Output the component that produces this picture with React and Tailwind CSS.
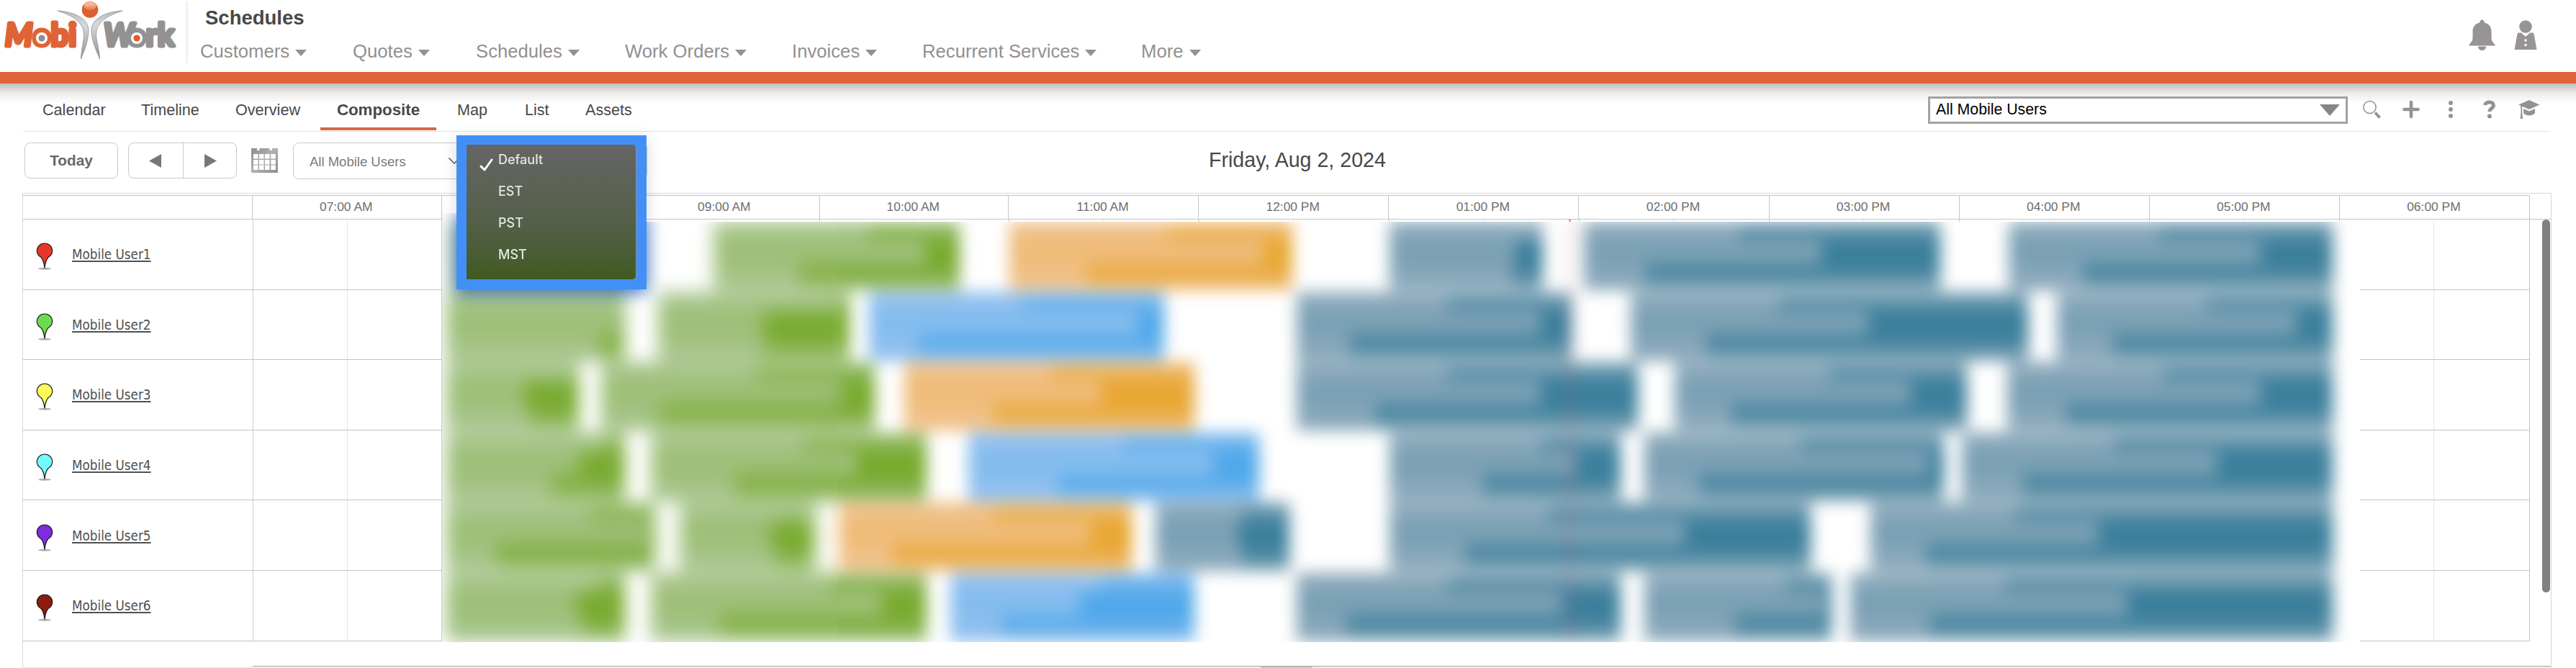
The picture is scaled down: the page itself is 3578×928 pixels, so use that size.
import React from "react";

const NAV = [
  ["Customers", "w-[212px]"],
  ["Quotes", "w-[171px]"],
  ["Schedules", "w-[207px]"],
  ["Work Orders", "w-[232px]"],
  ["Invoices", "w-[181px]"],
  ["Recurrent Services", "w-[304px]"],
  ["More", "w-[120px]"],
];

const TABS = [
  ["Calendar", "w-[137px]"],
  ["Timeline", "w-[131px]"],
  ["Overview", "w-[140px]"],
  ["Composite", "w-[161px]"],
  ["Map", "ml-[7px] w-[94px]"],
  ["List", "w-[84px]"],
  ["Assets", "w-[120px]"],
];

const HOURS = [
  "07:00 AM", "08:00 AM", "09:00 AM", "10:00 AM", "11:00 AM", "12:00 PM",
  "01:00 PM", "02:00 PM", "03:00 PM", "04:00 PM", "05:00 PM", "06:00 PM",
];

const USERS = [
  ["Mobile User1", "#e8372a"],
  ["Mobile User2", "#6cdc4e"],
  ["Mobile User3", "#fdfb5a"],
  ["Mobile User4", "#74fbfd"],
  ["Mobile User5", "#7f2be0"],
  ["Mobile User6", "#8f1a10"],
];

const COLORS = {
  g: ["#79ab2f", "#a6c48a"],
  o: ["#e9a733", "#f0c189"],
  b: ["#50a9ea", "#90c0ef"],
  t: ["#3b7f9c", "#8ba9ba"],
};

// [row, colour, start, end, end of line 1, end of line 2, end of line 3]
const EVENTS = [
  [0, "g", 624, 860, 860, 860, 800],
  [0, "g", 991, 1333, 1205, 1285, 1110],
  [0, "o", 1402, 1795, 1620, 1755, 1510],
  [0, "t", 1930, 2143, 2143, 2105, 2100],
  [0, "t", 2200, 2695, 2415, 2530, 2285],
  [0, "t", 2790, 3240, 3000, 3140, 2893],
  [1, "g", 620, 868, 866, 866, 832],
  [1, "g", 914, 1180, 1165, 1060, 1060],
  [1, "b", 1207, 1617, 1420, 1580, 1275],
  [1, "t", 1801, 2183, 2010, 2140, 1875],
  [1, "t", 2265, 2817, 2470, 2595, 2370],
  [1, "t", 2857, 3240, 3065, 3190, 2935],
  [2, "g", 620, 804, 799, 728, 735],
  [2, "g", 835, 1215, 1050, 1168, 915],
  [2, "o", 1256, 1659, 1460, 1530, 1380],
  [2, "t", 1801, 2275, 2010, 2140, 1910],
  [2, "t", 2326, 2732, 2540, 2655, 2405],
  [2, "t", 2788, 3240, 3005, 3140, 2870],
  [3, "g", 620, 868, 840, 805, 765],
  [3, "g", 904, 1287, 1115, 1190, 1020],
  [3, "b", 1345, 1749, 1560, 1685, 1470],
  [3, "t", 1930, 2251, 2140, 2190, 2060],
  [3, "t", 2284, 2700, 2500, 2680, 2360],
  [3, "t", 2725, 3240, 2935, 3080, 2810],
  [4, "g", 620, 910, 820, 902, 690],
  [4, "g", 944, 1132, 1127, 1070, 1075],
  [4, "o", 1165, 1572, 1380, 1515, 1240],
  [4, "t", 1605, 1791, 1725, 1720, 1725],
  [4, "t", 1930, 2515, 2150, 2340, 2035],
  [4, "t", 2598, 3240, 2800, 2915, 2675],
  [5, "g", 620, 868, 830, 800, 810],
  [5, "g", 904, 1287, 1150, 1225, 1000],
  [5, "b", 1320, 1659, 1530, 1500, 1390],
  [5, "t", 1801, 2251, 2010, 2170, 1870],
  [5, "t", 2284, 2544, 2480, 2535, 2410],
  [5, "t", 2570, 3240, 2785, 2955, 2680],
];

function Logo() {
  const font = {
    fontFamily: "Lato, 'Liberation Sans', sans-serif",
    fontWeight: 700,
    strokeLinejoin: "round",
    strokeWidth: 5,
  };
  return (
    <svg className="h-[90px] w-[258px] shrink-0" viewBox="0 0 258 90">
      <defs>
        <linearGradient id="limb" x1="0" y1="0" x2="0" y2="1">
          <stop offset="0" stopColor="#b9bdc1" />
          <stop offset=".3" stopColor="#d6dadb" />
          <stop offset="1" stopColor="#8e9093" />
        </linearGradient>
        <linearGradient id="shine" x1="0" y1="0" x2="0" y2="1">
          <stop offset="0" stopColor="#fbd2b6" />
          <stop offset="1" stopColor="#e5733f" />
        </linearGradient>
      </defs>
      <text y="63.500" fontSize="43.500" fill="#e06336" stroke="#e06336" style={font}>
        <tspan x="7" fontStyle="italic">M</tspan>
        <tspan x="45.500">obi</tspan>
      </text>
      <circle cx="58" cy="53" r="8" fill="#fff" />
      <circle cx="58" cy="53" r="4.600" fill="#8f8d8e" />
      <text y="63.500" fontSize="43.500" fill="#939192" stroke="#939192" style={font}>
        <tspan x="144" fontStyle="italic">W</tspan>
        <tspan x="177.500">ork</tspan>
      </text>
      <circle cx="190" cy="53" r="8" fill="#fff" />
      <circle cx="190" cy="53" r="4.600" fill="#e05a2b" />
      <path d="M80 15C100 16 124 24 123 44C122 60 117 70 112.500 82C113 66 118 54 116 43C113 28 96 20 80 15Z" fill="url(#limb)" stroke="#8f9194" strokeWidth=".8" />
      <path d="M170 15C150 16 126 24 127 44C128 60 134 70 138.500 82C138 66 132 54 134 43C137 28 154 20 170 15Z" fill="url(#limb)" stroke="#8f9194" strokeWidth=".8" />
      <circle cx="125" cy="13.500" r="11.300" fill="#df5f2f" />
      <ellipse cx="125" cy="8.500" rx="8.500" ry="5.500" fill="url(#shine)" />
    </svg>
  );
}

function Pin({ color }) {
  return (
    <svg className="h-[39px] w-[24px]" viewBox="0 0 24 39">
      <ellipse cx="12" cy="36.300" rx="9" ry="1.500" fill="#777" opacity=".6" />
      <path d="M12 35.500C11.300 29 10 23.500 7 20.500C3 18.200 1.300 15 1.300 11.500A10.700 10.500 0 0 1 22.700 11.500C22.700 15 21 18.200 17 20.500C14 23.500 12.700 29 12 35.500Z" fill={color} stroke="#1a1a1a" strokeWidth="1.200" />
    </svg>
  );
}

function CalendarIcon() {
  return (
    <svg className="h-[34px] w-[37px]" viewBox="0 0 37 34">
      <defs>
        <linearGradient id="cal" x1="0" y1="0" x2="1" y2="1">
          <stop offset="0" stopColor="#8d8d8d" />
          <stop offset=".5" stopColor="#b0b0b0" />
          <stop offset="1" stopColor="#8d8d8d" />
        </linearGradient>
      </defs>
      <rect width="37" height="34" fill="url(#cal)" />
      <rect x="8" width="3.500" height="3" fill="#fff" />
      <rect x="25.500" width="3.500" height="3" fill="#fff" />
      {[8, 16, 23.5].map((y) =>
        [3, 11, 19, 27.3].map((x) => (
          <rect key={`${x}-${y}`} x={x} y={y} width="6.500" height="6.500" fill="#fff" />
        ))
      )}
    </svg>
  );
}

function BlurPane({ frame, left, top, blur }) {
  return (
    <div className={`absolute overflow-hidden bg-white ${frame}`}>
      <div className={`absolute inset-0 ${blur}`}>
        {EVENTS.map(([row, c, start, end, ...lines], i) => {
          const [base, text] = COLORS[c];
          return (
            <div
              key={i}
              className="absolute overflow-hidden"
              style={{ left: start - left, top: 308 + row * 97.6 - top, width: end - start, height: 95, background: base }}
            >
              <div className="absolute inset-x-0 top-0 h-[24px] opacity-50" style={{ background: text }} />
              <div className="absolute inset-x-0 bottom-0 h-[26px] opacity-40" style={{ background: text }} />
              {lines.map((stop, n) => (
                <div
                  key={n}
                  className="absolute left-0"
                  style={{ top: [0, 26, 60][n], width: stop - start, height: [26, 34, 35][n], background: text, opacity: [0.95, 0.8, 0.95][n] }}
                />
              ))}
              <div className="absolute inset-x-0 top-0 h-[6px] opacity-70" style={{ background: text }} />
              <div className="absolute inset-x-0 bottom-0 h-[8px] opacity-70" style={{ background: text }} />
            </div>
          );
        })}
        <div className="absolute h-[600px] w-[6px] bg-[#c0506a] opacity-25" style={{ left: 2178 - left, top: 300 - top }} />
        <div className="absolute h-[106px] w-[264px] bg-[#4f86e0]" style={{ left: 634 - left, top: 300 - top }} />
      </div>
    </div>
  );
}

export default function App() {
  return (
    <div className="relative h-[928px] w-[3578px] overflow-hidden bg-white font-['Liberation_Sans',Arial,sans-serif]">
      <header className="flex h-[100px] items-start">
        <Logo />
        <div className="mt-[2px] h-[86px] w-[3px] bg-[#f1f1f1]" />
        <div className="ml-[17px] flex flex-1 flex-col">
          <h1 className="h-[50px] pl-[7px] text-[27.500px] leading-[50px] font-bold text-[#484848]">Schedules</h1>
          <nav className="flex h-[42px] items-center">
            {NAV.map(([label, width]) => (
              <a key={label} className={`flex shrink-0 items-center text-[25.700px] leading-[42px] whitespace-nowrap text-[#929090] ${width}`}>
                {label}
                <svg className="mt-[4px] ml-[8px] h-[9px] w-[16px]" viewBox="0 0 16 9">
                  <path d="M0 0H16L8 9Z" fill="#929090" />
                </svg>
              </a>
            ))}
          </nav>
        </div>
        <div className="flex gap-[26px] pt-[27px] pr-[54px]">
          <svg className="h-[44px] w-[37px]" viewBox="0 0 37 44" fill="#989493">
            <path d="M18.500 0.500C20.500 0.500 21.500 2.500 22 4.500C28 6 31.500 10 31.500 17V25C31.500 30 33.500 31.500 36.500 35V36.500H.5V35C3.500 31.500 5.500 30 5.500 25V17C5.500 10 9 6 15 4.500C15.500 2.500 16.500 .5 18.500 .5Z" />
            <path d="M13 37.500H24C24 41 21.500 43 18.500 43S13 41 13 37.500Z" />
          </svg>
          <svg className="h-[43px] w-[32px]" viewBox="0 0 32 43" fill="#989493">
            <circle cx="16" cy="10" r="8.800" />
            <path d="M6 18.500H10L16 24L22 18.500H26Q27 18.500 27.500 20L31.500 42H.5L4.500 20Q5 18.500 6 18.500Z" />
            <circle cx="16" cy="29" r="1.700" fill="#fff" />
            <circle cx="16" cy="35.500" r="1.700" fill="#fff" />
          </svg>
        </div>
      </header>
      <div className="relative h-[16px] bg-[#df6238]">
        <div className="absolute inset-x-0 top-full h-[28px] bg-linear-to-b from-black/25 via-black/7 via-50% to-transparent" />
      </div>

      <div className="mr-[37px] ml-[32px] flex h-[67px] justify-between border-b border-[#e2e2e2] pl-[5px]">
        <div className="flex">
          {TABS.map(([label, width]) => (
            <a
              key={label}
              className={`relative h-[65px] shrink-0 leading-[74px] whitespace-nowrap text-[#484848] ${width} ${
                label === "Composite" ? "border-b-[4px] border-[#d56842] text-center text-[22.300px] font-bold" : "pl-[22px] text-[21.600px]"
              }`}
            >
              {label}
            </a>
          ))}
        </div>
        <div className="relative flex pr-[13px]">
          <div className="mt-[18px] mr-[-1px] flex h-[38px] w-[583px] items-center justify-between border-[3px] border-[#a2a2a2] bg-white pr-[8px] pl-[8px] text-[21.300px] text-black">
            <span>All Mobile Users</span>
            <svg className="h-[16px] w-[28px]" viewBox="0 0 28 16">
              <path d="M0 0H28L14 16Z" fill="#868686" />
            </svg>
          </div>
          <div className="mt-[20px] ml-[22px] flex h-[32px] items-center">
            <svg className="h-[26px] w-[25px]" viewBox="0 0 25 26" fill="none" stroke="#959293">
              <circle cx="9.500" cy="10" r="8.600" strokeWidth="1.500" />
              <path d="M17 17.500L23.500 24.500" strokeWidth="4" />
            </svg>
            <svg className="ml-[30px] h-[26px] w-[24px]" viewBox="0 0 24 26" stroke="#959293" strokeWidth="4.600" strokeLinecap="round">
              <path d="M12 3V23M2.500 13H21.500" />
            </svg>
            <svg className="ml-[39px] h-[26px] w-[8px]" viewBox="0 0 8 26" fill="#959293">
              <circle cx="4" cy="4" r="3" />
              <circle cx="4" cy="13" r="3" />
              <circle cx="4" cy="22" r="3" />
            </svg>
            <svg className="ml-[41px] h-[26px] w-[18px]" viewBox="0 0 18 26" fill="none" stroke="#959293">
              <path d="M2.500 7C3.500 1.500 14.500 1.500 14.500 7.500C14.500 11.500 9 11.500 9 16" strokeWidth="5" />
              <circle cx="9" cy="22.500" r="3" fill="#959293" stroke="none" />
            </svg>
            <svg className="ml-[31px] h-[27px] w-[30px]" viewBox="0 0 30 27" fill="#959293">
              <path d="M15 0L29.500 6.500L15 13L0 6.500Z" />
              <path d="M7 12L15 15.500L23 12V18C20 22.500 10 22.500 7 18Z" />
              <path d="M3.200 8H5.200V17L6 26H2.500L3.500 17Z" />
            </svg>
          </div>
        </div>
      </div>

      <div className="relative flex h-[85px] items-start pt-[15px] pl-[34px] text-[#707070]">
        <button className="h-[50px] w-[130px] rounded-[8px] border border-[#c8c8c8] text-[20.800px] font-bold text-[#686868]">Today</button>
        <div className="ml-[14px] flex h-[50px] w-[151px] rounded-[8px] border border-[#c8c8c8]">
          <div className="flex w-[76px] items-center border-r border-[#c8c8c8] pl-[28px]">
            <svg className="h-[19px] w-[17px]" viewBox="0 0 17 19"><path d="M0 9.500L17 0V19Z" fill="#777" /></svg>
          </div>
          <div className="flex flex-1 items-center pl-[29px]">
            <svg className="h-[19px] w-[17px]" viewBox="0 0 17 19"><path d="M17 9.500L0 0V19Z" fill="#777" /></svg>
          </div>
        </div>
        <div className="mt-[8px] ml-[20px]"><CalendarIcon /></div>
        <div className="ml-[21px] flex h-[51px] w-[241px] items-center justify-between rounded-[8px] border border-[#c8c8c8] pr-[8px] pl-[22px] text-[18.500px] text-[#7a7a7a]">
          <span className="pt-[2px]">All Mobile Users</span>
          <svg className="h-[9px] w-[16px]" viewBox="0 0 16 9" fill="none" stroke="#666" strokeWidth="1.600"><path d="M.5 .5L8 8L15.500 .5" /></svg>
        </div>
        <div className="ml-[2px] h-[51px] w-[249px] rounded-[8px] border border-[#c8c8c8]" />
        <div className="ml-[780px] h-[51px] text-[28.600px] leading-[49px] whitespace-nowrap text-[#484848]">Friday, Aug 2, 2024</div>
      </div>

      <section className="relative ml-[31px] h-[660px] w-[3513px] border border-[#d8d8d8] pt-[2px]">
        <div className="flex h-[34px] w-[3512px] border-b border-[#c4c4c4]">
          <div className="flex w-[3482px] border-t border-r border-[#c4c4c4]">
            <div className="w-[318px] shrink-0" />
            <div className="grid flex-1 grid-cols-[repeat(4,262.4fr)_repeat(8,264fr)]">
              {HOURS.map((h) => (
                <div key={h} className="border-l border-[#c6c6c6] pr-[2px] text-center text-[17.400px] leading-[31px] text-[#6e6e6e]">{h}</div>
              ))}
            </div>
          </div>
        </div>
        {USERS.map(([name, color]) => (
          <div key={name} className="flex h-[97.600px] w-[3482px] border-r border-b border-[#c4c4c4]">
            <div className="flex w-[319px] shrink-0 items-center pl-[18px]">
              <div className="mt-[7px]"><Pin color={color} /></div>
              <a className="mt-[2px] ml-[26px] text-[18.700px] text-[#505050] underline decoration-[1.500px] underline-offset-[2px] font-['DejaVu_Sans_Condensed','DejaVu_Sans',sans-serif]">{name}</a>
            </div>
            <div className="grid flex-1 grid-cols-[repeat(4,262.4fr)_repeat(8,264fr)]">
              {HOURS.map((h) => (
                <div key={h} className="flex border-l border-[#ccc]">
                  <div className="w-1/2 border-r border-[#e6e6e6]" />
                </div>
              ))}
            </div>
          </div>
        ))}
        <div className="mt-[34px] flex h-[3px]">
          <div className="w-[319px] border-t border-white bg-[#efefef]" />
          <div className="flex flex-1 justify-start border-t border-[#a5a5a5] bg-[#f0f0f0] pl-[1400px]">
            <div className="h-[2px] w-[72px] bg-[#c8c8c8]" />
          </div>
        </div>
        <div className="absolute top-[36px] right-[1px] h-[518px] w-[11px] rounded-full bg-[#808080]" />
      </section>

      <div className="absolute top-[304px] left-[2179px] h-[5px] w-[3px] bg-[#ec9a9a]" />
      <BlurPane frame="left-[614px] top-[296px] w-[284px] h-[596px]" left={614} top={296} blur="blur-[12px]" />
      <BlurPane frame="left-[898px] top-[308px] w-[266px] h-[584px]" left={898} top={308} blur="blur-[13px]" />
      <BlurPane frame="left-[1164px] top-[308px] w-[2114px] h-[584px]" left={1164} top={308} blur="blur-[11px]" />

      <div className="absolute top-[188px] left-[634px] h-[214px] w-[264px] bg-[#4290f7] px-[14px] pt-[13px] pb-[14px] shadow-[0_4px_20px_rgba(0,0,0,0.16)]">
        <ul className="h-[187px] w-[236px] rounded-r-[5px] border-r border-[#8b8f88] bg-linear-to-b from-[#656565] via-[#55604a] via-55% to-[#415a20] pt-[2px] pl-[18px] font-[Inter,sans-serif] text-[18px] font-medium text-[#e4e6e0]">
          <li className="flex h-[44px] items-center">
            <svg className="mt-[8px] mr-[7px] h-[18px] w-[19px]" viewBox="0 0 19 18" fill="none" stroke="#fff" strokeWidth="3" strokeLinecap="round" strokeLinejoin="round">
              <path d="M2 11L7 16L17 2" />
            </svg>
            <span className="-mt-[8px]">Default</span>
          </li>
          {["EST", "PST", "MST"].map((z) => (
            <li key={z} className="h-[44px] pl-[26px] leading-[38px]">{z}</li>
          ))}
        </ul>
      </div>
    </div>
  );
}
